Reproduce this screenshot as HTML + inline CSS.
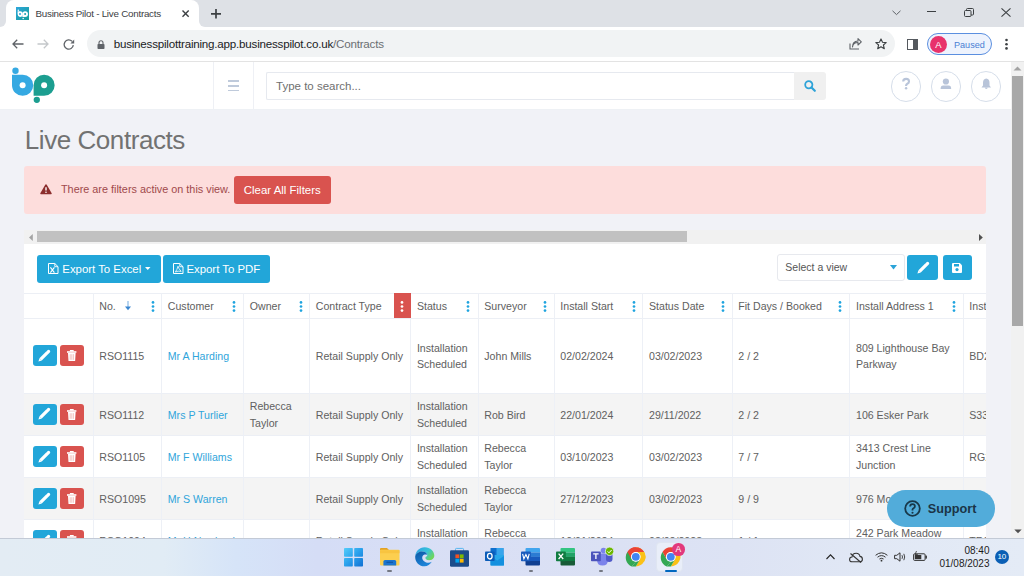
<!DOCTYPE html>
<html><head><meta charset="utf-8">
<style>
*{box-sizing:border-box;margin:0;padding:0}
html,body{width:1024px;height:576px;overflow:hidden}
body{position:relative;background:#f1f2f7;font-family:"Liberation Sans",sans-serif;color:#555}
.a{position:absolute}
svg{position:absolute;overflow:visible}
/* chrome */
#tabstrip{left:0;top:0;width:1024px;height:27px;background:#dee1e6}
#tab{left:6px;top:0;width:193px;height:27px;background:#fff;border-radius:8px 8px 0 0}
#toolbar{left:0;top:27px;width:1024px;height:35px;background:#fff;border-bottom:1px solid #e3e3e3}
#omni{left:87px;top:30px;width:808px;height:27px;border-radius:14px;background:#f1f3f4}
.ttl{font-size:9.8px;letter-spacing:-0.24px;color:#3c4043;white-space:nowrap}
/* app header */
#hdr{left:0;top:62px;width:1011px;height:47px;background:#fff;box-shadow:0 0.5px 0 #eceff4}
#burgerbox{left:213px;top:62px;width:41px;height:47px;border-left:1px solid #eef0f5;border-right:1px solid #eef0f5}
.bl{position:absolute;left:227.5px;width:11.5px;height:1.4px;background:#bfcadb}
#search{left:265.5px;top:72px;width:529px;height:27.5px;border:1px solid #e6e9ef;border-right:none;border-radius:2px 0 0 2px;background:#fff}
#sbtn{left:794px;top:72px;width:32px;height:27.5px;background:#f0f0f0;border-radius:0 3px 3px 0}
.circ{position:absolute;top:71px;width:30.5px;height:30.5px;border-radius:50%;border:1.1px solid #d6deea}
/* page */
#title{left:24.8px;top:124.8px;font-size:26px;letter-spacing:-0.44px;color:#727272;white-space:nowrap;line-height:30px}
#alert{left:24px;top:166px;width:962px;height:48px;background:#fddddc;border-radius:3px}
#alerttxt{left:61px;top:183px;font-size:10.85px;color:#a0494b;white-space:nowrap;line-height:12px}
#clr{left:233.5px;top:176px;width:97.5px;height:28px;background:#d9534f;border-radius:3px;color:#fff;font-size:11.45px;line-height:28px;text-align:center}
#hscroll{left:24px;top:230px;width:962px;height:13.5px;background:#f1f1f1}
#hthumb{left:37px;top:231px;width:650px;height:11px;background:#c1c1c1}
#panel{left:24px;top:243.5px;width:962px;height:300px;background:#fff}
.btn{position:absolute;background:#22a6d9;border-radius:3px;color:#fff;font-size:11.4px;white-space:nowrap}
#vscroll{left:1011px;top:62px;width:13px;height:476px;background:#f1f1f1}
#vthumb{left:1012px;top:75.5px;width:11px;height:250px;background:#a8a8a8}
/* table */
.row{position:absolute;left:24px;width:962px}
.vl{position:absolute;width:1px;background:#edf0f6}
.hl{position:absolute;left:24px;width:962px;height:1px;background:#eceff5}
.c{position:absolute;font-size:10.6px;line-height:16.4px;color:#606060;white-space:nowrap;display:flex;align-items:center}
.lnk{color:#2fa5db}
.kb{position:absolute;width:3px;height:13px}
.kb i{position:absolute;left:0;width:2.8px;height:2.8px;border-radius:50%;background:#1fa4df}
.eb{position:absolute;left:32.5px;width:24px;height:21px;background:#22a6d9;border-radius:3px}
.db{position:absolute;left:60.2px;width:23.7px;height:21px;background:#d9534f;border-radius:3px}
/* taskbar */
#taskbar{left:0;top:537.5px;width:1024px;height:38.5px;background:linear-gradient(90deg,#e3ecf4 0%,#e1ecf5 16%,#d6e4f8 23%,#d5ddf6 31%,#d9dff5 45%,#dbe1f4 60%,#dde3f4 72%,#e1e8f5 85%,#e4ebf6 100%);border-top:1px solid #c3cad6}
#support{left:887.3px;top:490px;width:107.6px;height:36.6px;border-radius:18.3px;background:#52acda}
</style></head>
<body>
<!-- browser chrome -->
<div id="tabstrip" class="a"></div>
<div class="a" style="left:0;top:21px;width:6px;height:6px;background:#fff"></div>
<div class="a" style="left:0;top:0;width:6px;height:27px;background:#dee1e6;border-bottom-right-radius:6px"></div>
<div class="a" style="left:199px;top:21px;width:6px;height:6px;background:#fff"></div>
<div class="a" style="left:199px;top:0;width:8px;height:27px;background:#dee1e6;border-bottom-left-radius:6px"></div>
<div id="tab" class="a"></div>
<div id="toolbar" class="a"></div>
<div id="omni" class="a"></div>

<!-- favicon -->
<svg style="left:16px;top:7px" width="13" height="13" viewBox="0 0 13 13"><defs><linearGradient id="fg" x1="0" y1="0" x2="1" y2="1"><stop offset="0" stop-color="#2ea6dc"/><stop offset="1" stop-color="#159e9a"/></linearGradient></defs><rect width="13" height="13" fill="url(#fg)"/>
<circle cx="2.3" cy="3.3" r="0.75" fill="#fff"/><path d="M1.6 4.2H4A2.9 2.9 0 0 1 4 10A2.9 2.9 0 0 1 1.6 7.1Z" fill="#fff"/><circle cx="4" cy="7.1" r="1" fill="#2aa5d8"/>
<path d="M6.4 10V7.1A2.9 2.9 0 0 1 9.1 4.2A2.9 2.9 0 0 1 9.1 10Z" fill="#fff"/><circle cx="9.1" cy="7.1" r="1" fill="#1aa0b0"/><circle cx="7.2" cy="11.4" r="0.75" fill="#fff"/></svg>
<div class="a ttl" style="left:35.5px;top:7.8px;line-height:11px">Business Pilot - Live Contracts</div>
<svg style="left:182px;top:10px" width="7.2" height="7.2" viewBox="0 0 7.2 7.2"><path d="M0.5 0.5L6.7 6.7M6.7 0.5L0.5 6.7" stroke="#3c4043" stroke-width="1.4"/></svg>
<svg style="left:211px;top:8.8px" width="10" height="9.6" viewBox="0 0 10 9.6"><path d="M5 0V9.6M0 4.8H10" stroke="#3c4043" stroke-width="1.7"/></svg>
<!-- window controls -->
<svg style="left:892px;top:9.5px" width="9" height="6" viewBox="0 0 9 6"><path d="M0.5 0.8L4.5 4.6L8.5 0.8" fill="none" stroke="#5f6368" stroke-width="1"/></svg>
<div class="a" style="left:927px;top:11px;width:9px;height:1px;background:#3c4043"></div>
<svg style="left:964px;top:8px" width="10" height="9" viewBox="0 0 10 9"><rect x="0.5" y="2.5" width="6.5" height="6" rx="1" fill="none" stroke="#3c4043" stroke-width="1"/><path d="M2.5 2.5V1.5Q2.5 0.5 3.5 0.5H8.5Q9.5 0.5 9.5 1.5V6Q9.5 7 8.5 7H7" fill="none" stroke="#3c4043" stroke-width="1"/></svg>
<svg style="left:1001px;top:8px" width="10" height="9" viewBox="0 0 10 9"><path d="M0.5 0.3L9.5 8.7M9.5 0.3L0.5 8.7" stroke="#3c4043" stroke-width="1.1"/></svg>
<!-- nav icons -->
<svg style="left:12px;top:39px" width="12" height="10" viewBox="0 0 12 10"><path d="M11.5 5H1.2M5.2 0.8L1 5L5.2 9.2" fill="none" stroke="#5f6368" stroke-width="1.3"/></svg>
<svg style="left:37px;top:39px" width="12" height="10" viewBox="0 0 12 10"><path d="M0.5 5H10.8M6.8 0.8L11 5L6.8 9.2" fill="none" stroke="#c4c7ca" stroke-width="1.3"/></svg>
<svg style="left:63px;top:38.5px" width="12" height="11" viewBox="0 0 12 11"><path d="M10.3 6.2A4.6 4.6 0 1 1 9 2.3" fill="none" stroke="#5f6368" stroke-width="1.3"/><path d="M11.2 0.6V4.4H7.4Z" fill="#5f6368"/></svg>
<!-- lock -->
<svg style="left:97px;top:39.5px" width="8" height="9" viewBox="0 0 8 9"><path d="M2 4V2.8A2 2 0 0 1 6 2.8V4" fill="none" stroke="#5f6368" stroke-width="1.1"/><rect x="0.5" y="4" width="7" height="5" rx="0.8" fill="#5f6368"/></svg>
<div class="a" style="left:113.7px;top:37.4px;font-size:11.6px;letter-spacing:-0.21px;line-height:13px;color:#202124;white-space:nowrap">businesspilottraining.app.businesspilot.co.uk<span style="color:#6b6e72">/Contracts</span></div>
<!-- share, star -->
<svg style="left:849px;top:38px" width="13" height="12" viewBox="0 0 13 12"><path d="M1 5.5V11H10" fill="none" stroke="#5f6368" stroke-width="1.1"/><path d="M3.5 9Q4 4.5 9 4.5V7L12.3 3.8L9 0.6V3Q3.5 3.2 3.5 9Z" fill="none" stroke="#5f6368" stroke-width="1.1" stroke-linejoin="round"/></svg>
<svg style="left:874.5px;top:37.5px" width="12" height="12" viewBox="0 0 12 12"><path d="M6 0.9L7.5 4.3L11.2 4.6L8.4 7L9.3 10.7L6 8.7L2.7 10.7L3.6 7L0.8 4.6L4.5 4.3Z" fill="none" stroke="#3c4043" stroke-width="1.1" stroke-linejoin="round"/></svg>
<!-- sidebar icon -->
<div class="a" style="left:907px;top:38.5px;width:11.3px;height:11px;border:1.7px solid #55595e"></div>
<div class="a" style="left:913.3px;top:38.5px;width:5px;height:11px;background:#55595e"></div>
<!-- paused pill -->
<div class="a" style="left:927px;top:33px;width:65px;height:22px;border-radius:11px;border:1px solid #5b8fe0;background:#eef3fd"></div>
<div class="a" style="left:930px;top:35.5px;width:17px;height:17px;border-radius:50%;background:#e8326b;color:#fff;font-size:9.5px;line-height:17px;text-align:center">A</div>
<div class="a" style="left:954px;top:38.6px;font-size:9.1px;line-height:12px;color:#4a7fd4;white-space:nowrap">Paused</div>
<!-- kebab -->
<svg style="left:1004px;top:38px" width="5" height="13" viewBox="0 0 5 13"><circle cx="2.5" cy="2" r="1.3" fill="#3c4043"/><circle cx="2.5" cy="6.2" r="1.3" fill="#3c4043"/><circle cx="2.5" cy="10.4" r="1.3" fill="#3c4043"/></svg>

<!-- app header -->
<div id="hdr" class="a"></div>
<svg style="left:0;top:62px" width="70" height="46" viewBox="0 62 70 46">
 <circle cx="15.5" cy="70.8" r="3.2" fill="#35a9e2"/>
 <path d="M12 74.7H22.7A10.55 10.55 0 0 1 22.7 95.8A10.55 10.55 0 0 1 12 85.25Z" fill="#35a9e2"/>
 <circle cx="22.6" cy="85.2" r="3" fill="#fff"/>
 <path d="M33.6 95.8V85.25A10.55 10.55 0 0 1 44.1 74.7A10.55 10.55 0 0 1 44.1 95.8Z" fill="#1c9e90"/>
 <circle cx="44.1" cy="85.2" r="3" fill="#fff"/>
 <circle cx="36.8" cy="99.8" r="3.15" fill="#1c9e90"/>
</svg>
<div id="burgerbox" class="a"></div>
<div class="bl" style="top:80.3px"></div>
<div class="bl" style="top:85.2px"></div>
<div class="bl" style="top:90px"></div>
<div id="search" class="a"></div>
<div class="a" style="left:276px;top:79.5px;font-size:11.5px;line-height:13px;color:#6f6f6f;white-space:nowrap">Type to search...</div>
<div id="sbtn" class="a"></div>
<svg style="left:804px;top:80px" width="12" height="12" viewBox="0 0 12 12"><circle cx="4.8" cy="4.8" r="3.6" fill="none" stroke="#2ea3d8" stroke-width="1.8"/><path d="M7.5 7.5L10.8 10.8" stroke="#2ea3d8" stroke-width="2.2" stroke-linecap="round"/></svg>
<div class="circ" style="left:890.7px"></div>
<div class="circ" style="left:930.6px"></div>
<div class="circ" style="left:970.6px"></div>
<svg style="left:900px;top:77px" width="12" height="14" viewBox="0 0 12 14"><path d="M3.2 4.6Q3.2 1.9 6.1 1.9Q9 1.9 9 4.4Q9 5.9 7.3 6.7Q6.1 7.3 6.1 8.6V9" fill="none" stroke="#b8c4d9" stroke-width="2.1"/><circle cx="6.1" cy="11.3" r="1.2" fill="#b8c4d9"/></svg>
<svg style="left:940px;top:78px" width="12" height="12" viewBox="0 0 12 12"><circle cx="5.9" cy="3.5" r="3.1" fill="#b8c4d9"/><path d="M0.6 11Q0.6 7.6 3.2 7.6H8.6Q11.2 7.6 11.2 11Z" fill="#b8c4d9"/></svg>
<svg style="left:980.5px;top:78px" width="10.5" height="11.5" viewBox="0 0 10.5 11.5"><path d="M5.25 0.6Q8.5 1 8.5 4.8V7.4L10 9.4H0.5L2 7.4V4.8Q2 1 5.25 0.6Z" fill="#b8c4d9"/><path d="M3.8 9.6Q3.8 11 5.25 11Q6.7 11 6.7 9.6Z" fill="#b8c4d9"/></svg>
<div id="vscroll" class="a"></div>
<svg style="left:1013px;top:66px" width="9" height="5" viewBox="0 0 9 5"><path d="M0.5 4.5L4.5 0.5L8.5 4.5Z" fill="#a3a3a3"/></svg>
<svg style="left:1013.8px;top:529.2px" width="8" height="5" viewBox="0 0 8 5"><path d="M0.3 0.5L4 4.2L7.7 0.5Z" fill="#505050"/></svg>
<div id="vthumb" class="a"></div>
<!-- page -->
<div id="title" class="a">Live Contracts</div>
<div id="alert" class="a"></div>
<svg style="left:40.4px;top:183.6px" width="12" height="10.5" viewBox="0 0 12 10.5"><path d="M6 0.3Q6.6 0.3 6.9 0.9L11.7 9.2Q12 10.2 11 10.3H1Q0 10.2 0.3 9.2L5.1 0.9Q5.4 0.3 6 0.3Z" fill="#8c2e2e"/><path d="M6 3.2V6.4" stroke="#fff" stroke-width="1.4"/><circle cx="6" cy="8.2" r="0.8" fill="#fff"/></svg>
<div id="alerttxt" class="a">There are filters active on this view.</div>
<div id="clr" class="a">Clear All Filters</div>
<div id="hscroll" class="a"></div>
<div id="hthumb" class="a"></div>
<svg style="left:28.5px;top:233.5px" width="4" height="7" viewBox="0 0 4 7"><path d="M3.8 0L0 3.5L3.8 7Z" fill="#a3a3a3"/></svg>
<svg style="left:978.5px;top:233.5px" width="4" height="7" viewBox="0 0 4 7"><path d="M0 0L3.8 3.5L0 7Z" fill="#505050"/></svg>
<div id="panel" class="a"></div>

<!-- panel toolbar -->
<div class="btn" style="left:37px;top:255px;width:123.8px;height:27.5px"></div>
<svg style="left:48px;top:263px" width="10.5" height="11" viewBox="0 0 10.5 11"><path d="M0.5 0.5H6.8L10 3.7V10.5H0.5Z" fill="none" stroke="#fff" stroke-width="1"/><path d="M6.8 0.5V3.7H10" fill="none" stroke="#fff" stroke-width="0.9"/><path d="M2.4 4.4L6.4 9.6M6.4 4.4L2.4 9.6" stroke="#fff" stroke-width="1.1"/></svg>
<div class="a" style="left:62.3px;top:262.7px;font-size:11.4px;line-height:13px;color:#fff;white-space:nowrap">Export To Excel</div>
<svg style="left:145.3px;top:266.8px" width="5.5" height="3" viewBox="0 0 5.5 3"><path d="M0 0H5.5L2.75 3Z" fill="#fff"/></svg>
<div class="btn" style="left:163px;top:255px;width:106.7px;height:27.5px"></div>
<svg style="left:172.5px;top:263px" width="10.5" height="11" viewBox="0 0 10.5 11"><path d="M0.5 0.5H6.8L10 3.7V10.5H0.5Z" fill="none" stroke="#fff" stroke-width="1"/><path d="M6.8 0.5V3.7H10" fill="none" stroke="#fff" stroke-width="0.9"/><path d="M5 3.2Q5.6 5.8 8.2 8.4Q5 7.6 2.4 9Q4.2 6.5 5 3.2Z" fill="none" stroke="#fff" stroke-width="0.8"/></svg>
<div class="a" style="left:186.4px;top:262.9px;font-size:11.4px;line-height:13px;color:#fff;white-space:nowrap">Export To PDF</div>
<div class="a" style="left:776.8px;top:254.3px;width:128.2px;height:26.3px;border:1px solid #e7e9ee;border-radius:3px;background:#fff"></div>
<div class="a" style="left:785.3px;top:261px;font-size:10.5px;line-height:13px;color:#555;white-space:nowrap">Select a view</div>
<svg style="left:889.5px;top:265px" width="7" height="4.5" viewBox="0 0 7 4.5"><path d="M0 0H7L3.5 4.5Z" fill="#2aa3d8"/></svg>
<div class="btn" style="left:907px;top:254.8px;width:31.4px;height:25px"></div>
<svg style="left:917px;top:261.5px" width="12" height="12" viewBox="0 0 12 12"><path d="M2.6 9.4L9.6 2.4" stroke="#fff" stroke-width="3.2"/><path d="M10.2 1.8L10.6 1.4" stroke="#fff" stroke-width="3.2" stroke-linecap="round"/><path d="M1.5 8.2L3.8 10.5L0.4 11.6Z" fill="#fff"/></svg>
<div class="btn" style="left:942.5px;top:254.8px;width:29.4px;height:25px"></div>
<svg style="left:951.8px;top:262.5px" width="10" height="10" viewBox="0 0 10 10"><path d="M0 1Q0 0 1 0H7.8L10 2.2V9Q10 10 9 10H1Q0 10 0 9Z" fill="#fff"/><rect x="2" y="1" width="5" height="2.5" fill="#22a6d9"/><circle cx="5" cy="6.6" r="1.6" fill="#22a6d9"/></svg>
<!-- TABLE -->
<div class="a" style="left:0;top:0;width:986px;height:576px;overflow:hidden">
<!--TABLE_START-->
<div class="hl" style="top:292.8px"></div>
<div class="hl" style="top:317.8px"></div>
<div class="hl" style="top:392.8px"></div>
<div class="hl" style="top:435.1px"></div>
<div class="hl" style="top:477.0px"></div>
<div class="hl" style="top:519.0999999999999px"></div>
<div class="row" style="top:393.8px;height:41.30000000000001px;background:#f4f4f4"></div>
<div class="row" style="top:478.0px;height:41.099999999999966px;background:#f4f4f4"></div>
<div class="vl" style="left:92.5px;top:293px;height:250px"></div>
<div class="vl" style="left:161.0px;top:293px;height:250px"></div>
<div class="vl" style="left:243.0px;top:293px;height:250px"></div>
<div class="vl" style="left:309.0px;top:293px;height:250px"></div>
<div class="vl" style="left:410.1px;top:293px;height:250px"></div>
<div class="vl" style="left:477.5px;top:293px;height:250px"></div>
<div class="vl" style="left:553.5px;top:293px;height:250px"></div>
<div class="vl" style="left:642.2px;top:293px;height:250px"></div>
<div class="vl" style="left:731.5px;top:293px;height:250px"></div>
<div class="vl" style="left:849.2px;top:293px;height:250px"></div>
<div class="vl" style="left:962.5px;top:293px;height:250px"></div>
<div class="c" style="left:99.3px;top:293px;height:25px;padding-top:1px">No.</div>
<svg style="left:150.9px;top:300px" width="4" height="13" viewBox="0 0 4 13"><circle cx="2" cy="2.4" r="1.35" fill="#1fa4df"/><circle cx="2" cy="6.5" r="1.35" fill="#1fa4df"/><circle cx="2" cy="10.6" r="1.35" fill="#1fa4df"/></svg>
<div class="c" style="left:167.8px;top:293px;height:25px;padding-top:1px">Customer</div>
<svg style="left:231.7px;top:300px" width="4" height="13" viewBox="0 0 4 13"><circle cx="2" cy="2.4" r="1.35" fill="#1fa4df"/><circle cx="2" cy="6.5" r="1.35" fill="#1fa4df"/><circle cx="2" cy="10.6" r="1.35" fill="#1fa4df"/></svg>
<div class="c" style="left:249.8px;top:293px;height:25px;padding-top:1px">Owner</div>
<svg style="left:298.5px;top:300px" width="4" height="13" viewBox="0 0 4 13"><circle cx="2" cy="2.4" r="1.35" fill="#1fa4df"/><circle cx="2" cy="6.5" r="1.35" fill="#1fa4df"/><circle cx="2" cy="10.6" r="1.35" fill="#1fa4df"/></svg>
<div class="c" style="left:315.8px;top:293px;height:25px;padding-top:1px">Contract Type</div>
<div class="c" style="left:416.90000000000003px;top:293px;height:25px;padding-top:1px">Status</div>
<svg style="left:466px;top:300px" width="4" height="13" viewBox="0 0 4 13"><circle cx="2" cy="2.4" r="1.35" fill="#1fa4df"/><circle cx="2" cy="6.5" r="1.35" fill="#1fa4df"/><circle cx="2" cy="10.6" r="1.35" fill="#1fa4df"/></svg>
<div class="c" style="left:484.3px;top:293px;height:25px;padding-top:1px">Surveyor</div>
<svg style="left:542.9px;top:300px" width="4" height="13" viewBox="0 0 4 13"><circle cx="2" cy="2.4" r="1.35" fill="#1fa4df"/><circle cx="2" cy="6.5" r="1.35" fill="#1fa4df"/><circle cx="2" cy="10.6" r="1.35" fill="#1fa4df"/></svg>
<div class="c" style="left:560.3px;top:293px;height:25px;padding-top:1px">Install Start</div>
<svg style="left:631.5px;top:300px" width="4" height="13" viewBox="0 0 4 13"><circle cx="2" cy="2.4" r="1.35" fill="#1fa4df"/><circle cx="2" cy="6.5" r="1.35" fill="#1fa4df"/><circle cx="2" cy="10.6" r="1.35" fill="#1fa4df"/></svg>
<div class="c" style="left:649.0px;top:293px;height:25px;padding-top:1px">Status Date</div>
<svg style="left:720.6px;top:300px" width="4" height="13" viewBox="0 0 4 13"><circle cx="2" cy="2.4" r="1.35" fill="#1fa4df"/><circle cx="2" cy="6.5" r="1.35" fill="#1fa4df"/><circle cx="2" cy="10.6" r="1.35" fill="#1fa4df"/></svg>
<div class="c" style="left:738.3px;top:293px;height:25px;padding-top:1px">Fit Days / Booked</div>
<svg style="left:838.2px;top:300px" width="4" height="13" viewBox="0 0 4 13"><circle cx="2" cy="2.4" r="1.35" fill="#1fa4df"/><circle cx="2" cy="6.5" r="1.35" fill="#1fa4df"/><circle cx="2" cy="10.6" r="1.35" fill="#1fa4df"/></svg>
<div class="c" style="left:856.0px;top:293px;height:25px;padding-top:1px">Install Address 1</div>
<svg style="left:951.7px;top:300px" width="4" height="13" viewBox="0 0 4 13"><circle cx="2" cy="2.4" r="1.35" fill="#1fa4df"/><circle cx="2" cy="6.5" r="1.35" fill="#1fa4df"/><circle cx="2" cy="10.6" r="1.35" fill="#1fa4df"/></svg>
<div class="c" style="left:969.3px;top:293px;height:25px;padding-top:1px">Inst</div>
<div class="a" style="left:393.7px;top:293.3px;width:17px;height:24.6px;background:#d9534f"></div>
<svg style="left:400.2px;top:300px" width="4" height="13" viewBox="0 0 4 13"><circle cx="2" cy="2.4" r="1.35" fill="#fff"/><circle cx="2" cy="6.5" r="1.35" fill="#fff"/><circle cx="2" cy="10.6" r="1.35" fill="#fff"/></svg>
<svg style="left:125.2px;top:300.6px" width="6" height="9.5" viewBox="0 0 6 9.5"><path d="M3 0V6" stroke="#92bfe8" stroke-width="1.3"/><path d="M0 5.4H6L3 9.2Z" fill="#3a86d0"/></svg>
<div class="eb" style="top:345.0px"></div>
<svg style="left:38.3px;top:349.8px" width="12" height="12" viewBox="0 0 12 12"><path d="M2.6 9.4L9.6 2.4" stroke="#fff" stroke-width="3.2"/><path d="M10.2 1.8L10.6 1.4" stroke="#fff" stroke-width="3.2" stroke-linecap="round"/><path d="M1.5 8.2L3.8 10.5L0.4 11.6Z" fill="#fff"/></svg>
<div class="db" style="top:345.0px"></div>
<svg style="left:67px;top:350.0px" width="9.5" height="11" viewBox="0 0 9.5 11"><rect x="0" y="1.2" width="9.4" height="1.6" fill="#fff"/><rect x="2.9" y="0" width="3.8" height="1.4" fill="#fff"/><path d="M1 3H8.6L8.1 11H1.5Z" fill="#fff"/><path d="M3.2 4.2V9.8M4.8 4.2V9.8M6.4 4.2V9.8" stroke="#eb9c99" stroke-width="0.6"/></svg>
<div class="c" style="left:99.3px;top:318.6px;height:75px"><span>RSO1115</span></div>
<div class="c lnk" style="left:167.8px;top:318.6px;height:75px"><span>Mr A Harding</span></div>
<div class="c" style="left:249.8px;top:318.6px;height:75px"></div>
<div class="c" style="left:315.8px;top:318.6px;height:75px"><span>Retail Supply Only</span></div>
<div class="c" style="left:416.90000000000003px;top:318.6px;height:75px"><span>Installation<br>Scheduled</span></div>
<div class="c" style="left:484.3px;top:318.6px;height:75px"><span>John Mills</span></div>
<div class="c" style="left:560.3px;top:318.6px;height:75px"><span>02/02/2024</span></div>
<div class="c" style="left:649.0px;top:318.6px;height:75px"><span>03/02/2023</span></div>
<div class="c" style="left:738.3px;top:318.6px;height:75px"><span>2 / 2</span></div>
<div class="c" style="left:856.0px;top:318.6px;height:75px"><span>809 Lighthouse Bay<br>Parkway</span></div>
<div class="c" style="left:969.3px;top:318.6px;height:75px"><span>BD23 4LP</span></div>
<div class="eb" style="top:403.65px"></div>
<svg style="left:38.3px;top:408.45px" width="12" height="12" viewBox="0 0 12 12"><path d="M2.6 9.4L9.6 2.4" stroke="#fff" stroke-width="3.2"/><path d="M10.2 1.8L10.6 1.4" stroke="#fff" stroke-width="3.2" stroke-linecap="round"/><path d="M1.5 8.2L3.8 10.5L0.4 11.6Z" fill="#fff"/></svg>
<div class="db" style="top:403.65px"></div>
<svg style="left:67px;top:408.65px" width="9.5" height="11" viewBox="0 0 9.5 11"><rect x="0" y="1.2" width="9.4" height="1.6" fill="#fff"/><rect x="2.9" y="0" width="3.8" height="1.4" fill="#fff"/><path d="M1 3H8.6L8.1 11H1.5Z" fill="#fff"/><path d="M3.2 4.2V9.8M4.8 4.2V9.8M6.4 4.2V9.8" stroke="#eb9c99" stroke-width="0.6"/></svg>
<div class="c" style="left:99.3px;top:393.6px;height:42.30000000000001px"><span>RSO1112</span></div>
<div class="c lnk" style="left:167.8px;top:393.6px;height:42.30000000000001px"><span>Mrs P Turlier</span></div>
<div class="c" style="left:249.8px;top:393.6px;height:42.30000000000001px"><span>Rebecca<br>Taylor</span></div>
<div class="c" style="left:315.8px;top:393.6px;height:42.30000000000001px"><span>Retail Supply Only</span></div>
<div class="c" style="left:416.90000000000003px;top:393.6px;height:42.30000000000001px"><span>Installation<br>Scheduled</span></div>
<div class="c" style="left:484.3px;top:393.6px;height:42.30000000000001px"><span>Rob Bird</span></div>
<div class="c" style="left:560.3px;top:393.6px;height:42.30000000000001px"><span>22/01/2024</span></div>
<div class="c" style="left:649.0px;top:393.6px;height:42.30000000000001px"><span>29/11/2022</span></div>
<div class="c" style="left:738.3px;top:393.6px;height:42.30000000000001px"><span>2 / 2</span></div>
<div class="c" style="left:856.0px;top:393.6px;height:42.30000000000001px"><span>106 Esker Park</span></div>
<div class="c" style="left:969.3px;top:393.6px;height:42.30000000000001px"><span>S33 8WS</span></div>
<div class="eb" style="top:445.75px"></div>
<svg style="left:38.3px;top:450.55px" width="12" height="12" viewBox="0 0 12 12"><path d="M2.6 9.4L9.6 2.4" stroke="#fff" stroke-width="3.2"/><path d="M10.2 1.8L10.6 1.4" stroke="#fff" stroke-width="3.2" stroke-linecap="round"/><path d="M1.5 8.2L3.8 10.5L0.4 11.6Z" fill="#fff"/></svg>
<div class="db" style="top:445.75px"></div>
<svg style="left:67px;top:450.75px" width="9.5" height="11" viewBox="0 0 9.5 11"><rect x="0" y="1.2" width="9.4" height="1.6" fill="#fff"/><rect x="2.9" y="0" width="3.8" height="1.4" fill="#fff"/><path d="M1 3H8.6L8.1 11H1.5Z" fill="#fff"/><path d="M3.2 4.2V9.8M4.8 4.2V9.8M6.4 4.2V9.8" stroke="#eb9c99" stroke-width="0.6"/></svg>
<div class="c" style="left:99.3px;top:435.90000000000003px;height:41.89999999999998px"><span>RSO1105</span></div>
<div class="c lnk" style="left:167.8px;top:435.90000000000003px;height:41.89999999999998px"><span>Mr F Williams</span></div>
<div class="c" style="left:249.8px;top:435.90000000000003px;height:41.89999999999998px"></div>
<div class="c" style="left:315.8px;top:435.90000000000003px;height:41.89999999999998px"><span>Retail Supply Only</span></div>
<div class="c" style="left:416.90000000000003px;top:435.90000000000003px;height:41.89999999999998px"><span>Installation<br>Scheduled</span></div>
<div class="c" style="left:484.3px;top:435.90000000000003px;height:41.89999999999998px"><span>Rebecca<br>Taylor</span></div>
<div class="c" style="left:560.3px;top:435.90000000000003px;height:41.89999999999998px"><span>03/10/2023</span></div>
<div class="c" style="left:649.0px;top:435.90000000000003px;height:41.89999999999998px"><span>03/02/2023</span></div>
<div class="c" style="left:738.3px;top:435.90000000000003px;height:41.89999999999998px"><span>7 / 7</span></div>
<div class="c" style="left:856.0px;top:435.90000000000003px;height:41.89999999999998px"><span>3413 Crest Line<br>Junction</span></div>
<div class="c" style="left:969.3px;top:435.90000000000003px;height:41.89999999999998px"><span>RG27 9TT</span></div>
<div class="eb" style="top:487.75px"></div>
<svg style="left:38.3px;top:492.55px" width="12" height="12" viewBox="0 0 12 12"><path d="M2.6 9.4L9.6 2.4" stroke="#fff" stroke-width="3.2"/><path d="M10.2 1.8L10.6 1.4" stroke="#fff" stroke-width="3.2" stroke-linecap="round"/><path d="M1.5 8.2L3.8 10.5L0.4 11.6Z" fill="#fff"/></svg>
<div class="db" style="top:487.75px"></div>
<svg style="left:67px;top:492.75px" width="9.5" height="11" viewBox="0 0 9.5 11"><rect x="0" y="1.2" width="9.4" height="1.6" fill="#fff"/><rect x="2.9" y="0" width="3.8" height="1.4" fill="#fff"/><path d="M1 3H8.6L8.1 11H1.5Z" fill="#fff"/><path d="M3.2 4.2V9.8M4.8 4.2V9.8M6.4 4.2V9.8" stroke="#eb9c99" stroke-width="0.6"/></svg>
<div class="c" style="left:99.3px;top:477.8px;height:42.099999999999966px"><span>RSO1095</span></div>
<div class="c lnk" style="left:167.8px;top:477.8px;height:42.099999999999966px"><span>Mr S Warren</span></div>
<div class="c" style="left:249.8px;top:477.8px;height:42.099999999999966px"></div>
<div class="c" style="left:315.8px;top:477.8px;height:42.099999999999966px"><span>Retail Supply Only</span></div>
<div class="c" style="left:416.90000000000003px;top:477.8px;height:42.099999999999966px"><span>Installation<br>Scheduled</span></div>
<div class="c" style="left:484.3px;top:477.8px;height:42.099999999999966px"><span>Rebecca<br>Taylor</span></div>
<div class="c" style="left:560.3px;top:477.8px;height:42.099999999999966px"><span>27/12/2023</span></div>
<div class="c" style="left:649.0px;top:477.8px;height:42.099999999999966px"><span>03/02/2023</span></div>
<div class="c" style="left:738.3px;top:477.8px;height:42.099999999999966px"><span>9 / 9</span></div>
<div class="c" style="left:856.0px;top:477.8px;height:42.099999999999966px"><span>976 Mountain View</span></div>
<div class="c" style="left:969.3px;top:477.8px;height:42.099999999999966px"><span>SK17 0DZ</span></div>
<div class="eb" style="top:530.3px"></div>
<svg style="left:38.3px;top:535.0999999999999px" width="12" height="12" viewBox="0 0 12 12"><path d="M2.6 9.4L9.6 2.4" stroke="#fff" stroke-width="3.2"/><path d="M10.2 1.8L10.6 1.4" stroke="#fff" stroke-width="3.2" stroke-linecap="round"/><path d="M1.5 8.2L3.8 10.5L0.4 11.6Z" fill="#fff"/></svg>
<div class="db" style="top:530.3px"></div>
<svg style="left:67px;top:535.3px" width="9.5" height="11" viewBox="0 0 9.5 11"><rect x="0" y="1.2" width="9.4" height="1.6" fill="#fff"/><rect x="2.9" y="0" width="3.8" height="1.4" fill="#fff"/><path d="M1 3H8.6L8.1 11H1.5Z" fill="#fff"/><path d="M3.2 4.2V9.8M4.8 4.2V9.8M6.4 4.2V9.8" stroke="#eb9c99" stroke-width="0.6"/></svg>
<div class="c" style="left:99.3px;top:519.9px;height:43px"><span>RSO1094</span></div>
<div class="c lnk" style="left:167.8px;top:519.9px;height:43px"><span>Mr H Newland</span></div>
<div class="c" style="left:249.8px;top:519.9px;height:43px"></div>
<div class="c" style="left:315.8px;top:519.9px;height:43px"><span>Retail Supply Only</span></div>
<div class="c" style="left:416.90000000000003px;top:519.9px;height:43px"><span>Installation<br>Scheduled</span></div>
<div class="c" style="left:484.3px;top:519.9px;height:43px"><span>Rebecca<br>Taylor</span></div>
<div class="c" style="left:560.3px;top:519.9px;height:43px"><span>10/01/2024</span></div>
<div class="c" style="left:649.0px;top:519.9px;height:43px"><span>03/02/2023</span></div>
<div class="c" style="left:738.3px;top:519.9px;height:43px"><span>1 / 1</span></div>
<div class="c" style="left:856.0px;top:519.9px;height:43px"><span>242 Park Meadow<br>Lane</span></div>
<div class="c" style="left:969.3px;top:519.9px;height:43px"><span>TR20 8DE</span></div>
<!--TABLE_END-->
</div>
<!-- support -->
<div id="support" class="a"></div>
<svg style="left:904.2px;top:499.8px" width="17" height="17" viewBox="0 0 17 17"><circle cx="8.5" cy="8.5" r="7.3" fill="none" stroke="#18384a" stroke-width="1.8"/><path d="M6.1 6.6Q6.1 4.1 8.5 4.1Q10.9 4.1 10.9 6.3Q10.9 7.6 9.5 8.3Q8.5 8.8 8.5 10V10.4" fill="none" stroke="#18384a" stroke-width="1.8"/><circle cx="8.5" cy="12.7" r="1.05" fill="#18384a"/></svg>
<div class="a" style="left:927.8px;top:501px;font-size:12.7px;font-weight:700;line-height:16px;color:#1b3447;white-space:nowrap">Support</div>
<!-- taskbar -->
<div id="taskbar" class="a"></div>
<!--TASKBAR_START-->
<!-- windows logo -->
<svg style="left:343.6px;top:547.7px" width="19" height="18.6" viewBox="0 0 19 18.6">
<defs><linearGradient id="wg" gradientUnits="userSpaceOnUse" x1="0" y1="0" x2="19" y2="18.6"><stop offset="0" stop-color="#55cdfa"/><stop offset="0.5" stop-color="#2aa0ec"/><stop offset="1" stop-color="#1170d3"/></linearGradient></defs>
<rect x="0" y="0" width="8.8" height="8.7" rx="0.8" fill="url(#wg)"/><rect x="10.2" y="0" width="8.8" height="8.7" rx="0.8" fill="url(#wg)"/>
<rect x="0" y="9.9" width="8.8" height="8.7" rx="0.8" fill="url(#wg)"/><rect x="10.2" y="9.9" width="8.8" height="8.7" rx="0.8" fill="url(#wg)"/>
</svg>
<!-- explorer -->
<svg style="left:379.6px;top:548px" width="19.5" height="17.5" viewBox="0 0 19.5 17.5">
<path d="M0 1Q0 0 1 0H7L9 2H0Z" fill="#e3a224"/>
<rect x="0" y="1.8" width="19.5" height="15.7" rx="1" fill="#fccf4f"/>
<rect x="0" y="2.2" width="19.5" height="3" fill="#f8c440"/>
<path d="M3.4 17.5V13.5Q3.4 12 5 12H14.6Q16.2 12 16.2 13.5V17.5Z" fill="#1a74cf"/>
<rect x="6.5" y="13.8" width="6.5" height="0.9" fill="#0d4e98"/>
</svg>
<div class="a" style="left:387px;top:570.3px;width:4.5px;height:1.6px;border-radius:1px;background:#747883"></div>
<!-- edge -->
<svg style="left:414.8px;top:547px" width="19.5" height="19.5" viewBox="0 0 20 20">
<defs><linearGradient id="eg1" x1="0" y1="0" x2="1" y2="0.6"><stop offset="0" stop-color="#2f9be6"/><stop offset="0.6" stop-color="#36c3d8"/><stop offset="1" stop-color="#6fd65c"/></linearGradient>
<linearGradient id="eg2" x1="0" y1="0" x2="0.5" y2="1"><stop offset="0" stop-color="#0c59a4"/><stop offset="1" stop-color="#1e85da"/></linearGradient></defs>
<path d="M10 0.2C15.5 0.2 19.8 4.2 19.8 8.8C19.8 12 17.4 13.6 14.6 13.6C11.6 13.6 10.2 12.2 10.8 10.6C11.2 9.6 12.6 9.8 12.6 8.2C12.6 6 10.2 4.6 7.6 4.6C3.6 4.6 0.2 7.6 0.2 10.2C0.2 4.6 4.4 0.2 10 0.2Z" fill="url(#eg1)"/>
<path d="M0.2 10.2C0.2 7.4 3.4 4.6 7.4 4.6C10.4 4.6 12.6 6.2 12.6 8.2C11.2 7.4 9 7.6 8 9C6.6 11 7.6 14.6 11.4 15.8C13.6 16.5 15.6 16 17.2 15.2C15.6 18 12.8 19.8 9.8 19.8C4.4 19.8 0.2 15.6 0.2 10.2Z" fill="url(#eg2)"/>
</svg>
<!-- store -->
<svg style="left:450px;top:547.5px" width="19" height="19" viewBox="0 0 19 19">
<path d="M5.5 3V1.2Q5.5 0.4 6.3 0.4H12.7Q13.5 0.4 13.5 1.2V3" fill="none" stroke="#58b6ef" stroke-width="1"/>
<path d="M0 3.4Q0 2.3 1.1 2.3H17.9Q19 2.3 19 3.4V17.4Q19 18.8 17.6 18.8H1.4Q0 18.8 0 17.4Z" fill="#1c4c8a"/>
<rect x="5.4" y="6.4" width="3.8" height="3.8" fill="#f25022"/><rect x="9.8" y="6.4" width="3.8" height="3.8" fill="#7fba00"/>
<rect x="5.4" y="10.8" width="3.8" height="3.8" fill="#00a4ef"/><rect x="9.8" y="10.8" width="3.8" height="3.8" fill="#ffb900"/>
</svg>
<!-- outlook -->
<svg style="left:485px;top:548px" width="19" height="17.5" viewBox="0 0 19 17.5">
<rect x="5.5" y="0" width="13" height="8" rx="0.6" fill="#0f6fce"/>
<rect x="11.5" y="0" width="7" height="8" fill="#36a5ec"/>
<path d="M5.5 7H19V16.5Q19 17.5 18 17.5H6.5Q5.5 17.5 5.5 16.5Z" fill="#28a8ea"/>
<path d="M5.5 8L12.2 12.5L19 8V17.5H5.5Z" fill="#1490df"/>
<rect x="0" y="3.4" width="9.6" height="9.6" rx="0.8" fill="#0a5cb8"/>
<ellipse cx="4.8" cy="8.2" rx="2.3" ry="2.8" fill="none" stroke="#fff" stroke-width="1.3"/>
</svg>
<!-- word -->
<svg style="left:520.5px;top:548px" width="19" height="17.5" viewBox="0 0 19 17.5">
<path d="M4.5 1Q4.5 0 5.5 0H18Q19 0 19 1V4.5H4.5Z" fill="#41a5ee"/>
<rect x="4.5" y="4.5" width="14.5" height="4.4" fill="#2b7cd3"/>
<rect x="4.5" y="8.8" width="14.5" height="4.4" fill="#185abd"/>
<path d="M4.5 13.1H19V16.5Q19 17.5 18 17.5H5.5Q4.5 17.5 4.5 16.5Z" fill="#103f91"/>
<rect x="0" y="3.4" width="9.8" height="9.8" rx="0.8" fill="#185abd"/>
<path d="M1.6 5.8L2.9 10.8L4.9 6.6L6.9 10.8L8.2 5.8" fill="none" stroke="#fff" stroke-width="1.1"/>
</svg>
<div class="a" style="left:528.5px;top:570.3px;width:4.5px;height:1.6px;border-radius:1px;background:#747883"></div>
<!-- excel -->
<svg style="left:555.7px;top:548px" width="19" height="17.5" viewBox="0 0 19 17.5">
<path d="M4.5 1Q4.5 0 5.5 0H18Q19 0 19 1V4.5H4.5Z" fill="#33c481"/>
<rect x="4.5" y="4.5" width="14.5" height="4.4" fill="#21a366"/>
<rect x="4.5" y="8.8" width="14.5" height="4.4" fill="#107c41"/>
<path d="M4.5 13.1H19V16.5Q19 17.5 18 17.5H5.5Q4.5 17.5 4.5 16.5Z" fill="#185c37"/>
<rect x="0" y="3.4" width="9.8" height="9.8" rx="0.8" fill="#107c41"/>
<path d="M2.6 5.6L7.2 11M7.2 5.6L2.6 11" stroke="#fff" stroke-width="1.3"/>
</svg>
<!-- teams -->
<svg style="left:590.9px;top:546px" width="23" height="20" viewBox="0 0 23 20">
<circle cx="12.5" cy="4.6" r="2.8" fill="#7b83eb"/>
<path d="M6 7.5H17V14Q17 19.5 11.5 19.5Q6 19.5 6 14Z" fill="#7b83eb"/>
<circle cx="17.5" cy="5.6" r="2.1" fill="#5059c9"/>
<path d="M15 8H21.5V13Q21.5 16 18.2 16Q15 16 15 13Z" fill="#5059c9"/>
<rect x="0" y="5.4" width="9.8" height="9.8" rx="0.8" fill="#4b53bc"/>
<path d="M2.2 7.8H7.6M4.9 7.8V13" stroke="#fff" stroke-width="1.3"/>
<circle cx="18.6" cy="5.3" r="4.2" fill="#6bb700" stroke="#e8ecf6" stroke-width="0.8"/>
<path d="M16.6 5.4L18 6.8L20.6 4" fill="none" stroke="#fff" stroke-width="1"/>
</svg>
<div class="a" style="left:598.5px;top:570.3px;width:4.5px;height:1.6px;border-radius:1px;background:#747883"></div>
<!-- chrome -->
<svg style="left:625.9px;top:546.7px" width="19.6" height="19.6" viewBox="-10 -10 20 20">
<path d="M0 -9.8A9.8 9.8 0 0 1 8.49 4.9L4.33 2.5A5 5 0 0 0 0 -5Z" fill="#fbc116"/>
<path d="M0 -9.8A9.8 9.8 0 0 0 -8.49 4.9L-4.33 2.5A5 5 0 0 1 0 -5Z" fill="#ea4335"/>
<path d="M0 -9.8A9.8 9.8 0 0 1 8.49 -4.9H0A5 5 0 0 0 -4.33 2.5L-8.49 -4.9A9.8 9.8 0 0 1 0 -9.8Z" fill="#ea4335"/>
<path d="M-8.49 -4.9L-4.33 2.5A5 5 0 0 0 0 5L-4.2 9.8A9.8 9.8 0 0 1 -8.49 -4.9Z" fill="#34a853"/>
<path d="M8.49 -4.9H0A5 5 0 0 1 4.33 2.5L0 9.8A9.8 9.8 0 0 0 8.49 -4.9Z" fill="#fbc116"/>
<path d="M-4.2 9.8L0 5A5 5 0 0 0 4.33 2.5L0 9.8A9.8 9.8 0 0 1 -4.2 9.8Z" fill="#34a853"/>
<circle r="4.9" fill="#fff"/><circle r="4" fill="#4285f4"/>
</svg>
<!-- active chrome -->
<div class="a" style="left:656px;top:542px;width:27px;height:30px;border-radius:4px;background:#e9eef9;border:1px solid #dfe5f1"></div>
<svg style="left:661.2px;top:546.7px" width="19.6" height="19.6" viewBox="-10 -10 20 20">
<path d="M0 -9.8A9.8 9.8 0 0 1 8.49 -4.9H0A5 5 0 0 0 -4.33 2.5L-8.49 -4.9A9.8 9.8 0 0 1 0 -9.8Z" fill="#ea4335"/>
<path d="M-8.49 -4.9L-4.33 2.5A5 5 0 0 0 0 5L-4.2 9.8A9.8 9.8 0 0 1 -8.49 -4.9Z" fill="#34a853"/>
<path d="M8.49 -4.9H0A5 5 0 0 1 4.33 2.5L0 9.8A9.8 9.8 0 0 0 8.49 -4.9Z" fill="#fbc116"/>
<path d="M-4.2 9.8L0 5A5 5 0 0 0 4.33 2.5L0 9.8A9.8 9.8 0 0 1 -4.2 9.8Z" fill="#34a853"/>
<circle r="4.9" fill="#fff"/><circle r="4" fill="#4285f4"/>
</svg>
<div class="a" style="left:672px;top:543.2px;width:12.6px;height:12.6px;border-radius:50%;background:#e2397c;color:#fff;font-size:8.5px;line-height:12.6px;text-align:center">A</div>
<div class="a" style="left:664.8px;top:569.6px;width:12.3px;height:2.6px;border-radius:1.3px;background:#0067c0"></div>
<!-- tray -->
<svg style="left:826px;top:554px" width="9" height="5.5" viewBox="0 0 9 5.5"><path d="M0.5 5L4.5 0.8L8.5 5" fill="none" stroke="#222" stroke-width="1.1"/></svg>
<svg style="left:849px;top:551.5px" width="14" height="11" viewBox="0 0 14 11"><path d="M3.2 9.8Q0.6 9.8 0.6 7.4Q0.6 5.2 3 5Q3.4 1.2 7.2 1.2Q10.4 1.2 11 4.4Q13.4 4.6 13.4 7.2Q13.4 9.8 10.8 9.8Z" fill="none" stroke="#333" stroke-width="1.1"/><path d="M1.5 1.5L12 10.5" stroke="#333" stroke-width="1.1"/></svg>
<svg style="left:875px;top:552px" width="13" height="9.5" viewBox="0 0 13 9.5"><path d="M0.6 3.3Q6.5 -1.6 12.4 3.3M2.5 5.2Q6.5 2 10.5 5.2M4.4 7Q6.5 5.6 8.6 7" fill="none" stroke="#333" stroke-width="1"/><circle cx="6.5" cy="8.7" r="0.9" fill="#333"/></svg>
<svg style="left:894px;top:552px" width="12.5" height="10" viewBox="0 0 12.5 10"><path d="M0.6 3.3H2.8L6 0.8V9.2L2.8 6.7H0.6Z" fill="none" stroke="#333" stroke-width="1"/><path d="M8 3.2Q9 5 8 6.8M9.8 1.8Q11.6 5 9.8 8.2" fill="none" stroke="#333" stroke-width="0.9"/></svg>
<svg style="left:912.6px;top:551px" width="14.5" height="10" viewBox="0 0 14.5 10"><rect x="0.6" y="2.8" width="11.5" height="6.6" rx="1" fill="none" stroke="#333" stroke-width="1"/><rect x="12.4" y="4.6" width="1.5" height="3" fill="#333"/><rect x="1.8" y="4" width="6.5" height="4.2" fill="#333"/><path d="M3.5 0L2 3.5H4.5L3.2 6" fill="none" stroke="#333" stroke-width="0.8"/></svg>
<div class="a" style="left:940px;top:545px;width:49.5px;font-size:10px;line-height:12px;color:#1c1c1c;text-align:right">08:40</div>
<div class="a" style="left:930px;top:557.5px;width:59.5px;font-size:10px;line-height:12px;color:#1c1c1c;text-align:right">01/08/2023</div>
<div class="a" style="left:994.7px;top:549.5px;width:14px;height:14px;border-radius:50%;background:#0b5fb5;color:#fff;font-size:8px;line-height:14px;text-align:center;letter-spacing:-0.3px">10</div>

<!--TASKBAR_END-->
</body></html>
